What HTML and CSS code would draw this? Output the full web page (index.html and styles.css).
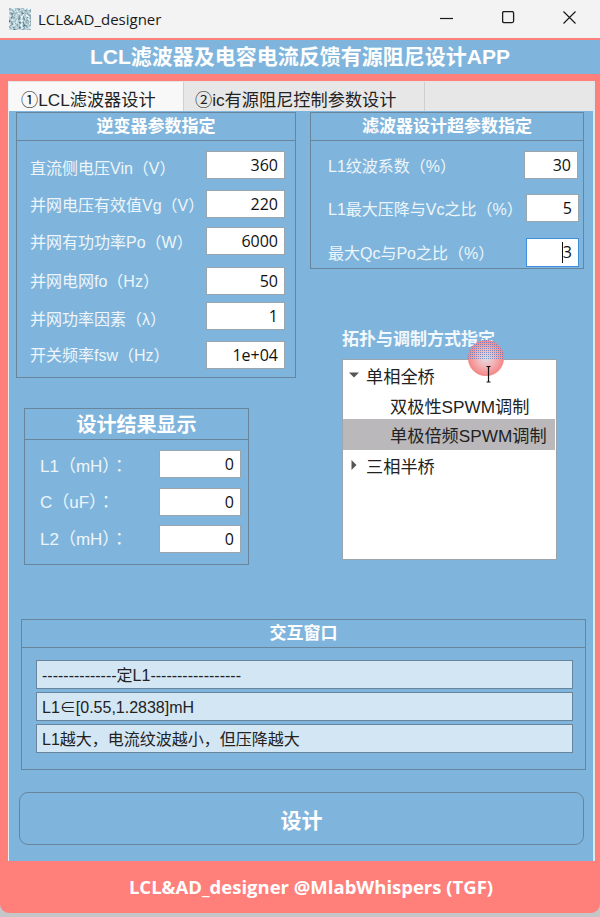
FILE: index.html
```html
<!DOCTYPE html>
<html lang="zh-CN">
<head>
<meta charset="utf-8">
<title>LCL&amp;AD_designer</title>
<link rel="stylesheet" href="styles.css">
</head>
<body>
<div class="window">
  <div class="titlebar">
    <svg class="app-icon" width="22" height="22" viewBox="0 0 22 22">
      <defs>
        <filter id="mosaic" x="0" y="0" width="100%" height="100%">
          <feTurbulence type="fractalNoise" baseFrequency="0.42" numOctaves="2" seed="7"/>
          <feColorMatrix type="matrix" values="1.1 1.1 0 0 -0.65  1.1 1.1 0 0 -0.52  1.1 1.1 0 0 -0.46  0 0 0 0 1"/>
        </filter>
      </defs>
      <rect width="22" height="22" filter="url(#mosaic)"/>
    </svg>
    <span class="app-name">LCL&amp;AD_designer</span>
    <div class="win-buttons">
      <svg class="win-btn win-min" width="14" height="14" viewBox="0 0 14 14"><path d="M0 7.5H13" stroke="#1a1a1a" stroke-width="1.2" fill="none"/></svg>
      <svg class="win-btn" width="14" height="14" viewBox="0 0 14 14"><rect x="0.6" y="0.6" width="11" height="11" rx="1.5" stroke="#1a1a1a" stroke-width="1.3" fill="none"/></svg>
      <svg class="win-btn" width="14" height="14" viewBox="0 0 14 14"><path d="M0.5 0.5L12.5 12.5M12.5 0.5L0.5 12.5" stroke="#1a1a1a" stroke-width="1.2" fill="none"/></svg>
    </div>
  </div>

  <header class="app-header">LCL滤波器及电容电流反馈有源阻尼设计APP</header>

  <div class="tabgroup">
    <div class="tabs">
      <div class="tab tab-active">①LCL滤波器设计</div>
      <div class="tab tab-second">②ic有源阻尼控制参数设计</div>
      <div class="tab-fill"></div>
    </div>

    <main class="content">
      <div class="columns">
        <div class="col-left">
          <section class="panel panel-inverter">
            <h2 class="panel-head">逆变器参数指定</h2>
            <div class="panel-body rows-inverter">
              <div class="row"><span class="label nudge-down">直流侧电压Vin（V）</span><div class="field field-inv">360</div></div>
              <div class="row"><span class="label">并网电压有效值Vg（V）</span><div class="field field-inv">220</div></div>
              <div class="row"><span class="label">并网有功功率Po（W）</span><div class="field field-inv">6000</div></div>
              <div class="row"><span class="label nudge-up">并网电网fo（Hz）</span><div class="field field-inv">50</div></div>
              <div class="row"><span class="label nudge-down">并网功率因素（λ）</span><div class="field field-inv">1</div></div>
              <div class="row"><span class="label nudge-up">开关频率fsw（Hz）</span><div class="field field-inv">1e+04</div></div>
            </div>
          </section>

          <section class="panel panel-result">
            <h2 class="panel-head panel-head-large">设计结果显示</h2>
            <div class="panel-body rows-result">
              <div class="row"><span class="label label-result">L1（mH）：</span><div class="field field-res">0</div></div>
              <div class="row"><span class="label label-result nudge-up">C（uF）：</span><div class="field field-res">0</div></div>
              <div class="row"><span class="label label-result nudge-up">L2（mH）：</span><div class="field field-res">0</div></div>
            </div>
          </section>
        </div>

        <div class="col-right">
          <section class="panel panel-filter">
            <h2 class="panel-head">滤波器设计超参数指定</h2>
            <div class="panel-body rows-filter">
              <div class="row"><span class="label">L1纹波系数（%）</span><div class="field field-a">30</div></div>
              <div class="row"><span class="label">L1最大压降与Vc之比（%）</span><div class="field field-b">5</div></div>
              <div class="row"><span class="label">最大Qc与Po之比（%）</span><div class="field field-b field-focus"><i class="caret"></i>3</div></div>
            </div>
          </section>

          <section class="topology">
            <h3 class="topology-title">拓扑与调制方式指定</h3>
            <div class="tree">
              <div class="tree-row"><svg class="arrow" width="10" height="10" viewBox="0 0 10 10"><path d="M0 2.5H10L5 7.5Z" fill="#555"/></svg>单相全桥</div>
              <div class="tree-row tree-child">双极性SPWM调制</div>
              <div class="tree-row tree-child tree-selected">单极倍频SPWM调制</div>
              <div class="tree-row"><svg class="arrow" width="10" height="10" viewBox="0 0 10 10"><path d="M2.5 0V10L7.5 5Z" fill="#555"/></svg>三相半桥</div>
            </div>
            <svg class="pointer" width="40" height="46" viewBox="0 0 40 46">
              <defs>
                <radialGradient id="halo" cx="0.5" cy="0.5" r="0.5">
                  <stop offset="0" stop-color="#d9dfe8"/>
                  <stop offset="0.45" stop-color="#f3b9bb"/>
                  <stop offset="1" stop-color="#f58585"/>
                </radialGradient>
                <pattern id="dots" width="2" height="2" patternUnits="userSpaceOnUse">
                  <rect width="1" height="1" fill="#4d78c8"/>
                </pattern>
                <clipPath id="upper"><rect x="0" y="0" width="40" height="22"/></clipPath>
              </defs>
              <circle cx="20" cy="20" r="18" fill="url(#halo)"/>
              <circle cx="20" cy="20" r="18" fill="url(#dots)" clip-path="url(#upper)" opacity="0.7"/>
              <path d="M20.5 28.5h4M22.5 28.5V44M20.5 44h4" stroke="#111" stroke-width="1.2" fill="none"/>
            </svg>
          </section>
        </div>
      </div>

      <section class="panel panel-console">
        <h2 class="panel-head">交互窗口</h2>
        <div class="panel-body console-body">
          <div class="log-line">--------------定L1-----------------</div>
          <div class="log-line">L1∈[0.55,1.2838]mH</div>
          <div class="log-line">L1越大，电流纹波越小，但压降越大</div>
        </div>
      </section>

      <button class="design-btn" type="button">设计</button>
    </main>
  </div>

  <footer class="app-footer">LCL&amp;AD_designer @MlabWhispers (TGF)</footer>
</div>
</body>
</html>
```
FILE: styles.css
```css
* { box-sizing: border-box; }
html, body { margin: 0; padding: 0; }
body {
  width: 600px;
  height: 917px;
  background: #c4c6c8;
  overflow: hidden;
  font-family: "Liberation Sans", "Noto Sans CJK SC", sans-serif;
}
.window {
  width: 600px;
  height: 913px;
  display: flex;
  flex-direction: column;
  background: #ff7f7b;
  border-radius: 0 0 9px 9px;
  overflow: hidden;
}
.titlebar {
  height: 38px;
  flex: none;
  background: #f3f3f3;
  display: flex;
  align-items: center;
  padding: 0 0 1px 9px;
}
.app-icon { flex: none; margin-right: 7px; }
.app-name {
  font-family: "Open Sans", sans-serif;
  font-size: 15px;
  color: #1a1a1a;
}
.win-buttons { margin-left: auto; display: flex; align-items: center; gap: 47px; padding: 0 23px 2px 0; }
.win-btn { display: block; }
.win-min { margin-right: 1px; }

.app-header {
  flex: none;
  margin-top: 2px;
  height: 34px;
  background: #7fb5dc;
  color: #fff;
  font-size: 21px;
  font-weight: 700;
  line-height: 34px;
  text-align: center;
}

.tabgroup {
  flex: none;
  margin: 7px 5px 0 8px;
  height: 780px;
  display: flex;
  flex-direction: column;
  background: #7fb5dc;
  border-right: 2px solid #dfe6ec;
  border-left: 1px solid #e8edf0;
}
.tabs { flex: none; height: 30px; display: flex; background: #e8e7e7; border-top: 1px solid #e4e4e4; }
.tab {
  flex: none;
  font-size: 17.2px;
  line-height: 37px;
  color: #222;
  white-space: nowrap;
  overflow: hidden;
}
.tab-active { width: 175px; background: #f8f8f8; padding-left: 12px; border-right: 1px solid #d0d0d0; }
.tab-second { width: 241px; padding-left: 11px; border-right: 1px solid #cfcfcf; }
.tab-fill { flex: 1; }

.content { flex: 1; display: flex; flex-direction: column; padding-top: 1px; }
.columns { display: flex; height: 507px; padding-left: 7px; gap: 14px; flex: none; }
.col-left { width: 280px; flex: none; }
.col-right { width: 274px; flex: none; }

.panel { border: 1.5px solid #69859b; background: #7fb5dc; }
.panel-head {
  margin: 0;
  height: 28px;
  font-size: 17px;
  line-height: 28px;
  font-weight: 700;
  color: #fff;
  text-align: center;
  border-bottom: 1.5px solid #69859b;
}
.panel-head-large { height: 31px; font-size: 20px; line-height: 32px; }
.panel-body { display: grid; align-items: start; }

.panel-inverter { height: 266px; }
.rows-inverter {
  padding: 10px 10px 0 13px;
  grid-template-rows: 39px 37px 40px 35px 39px 28px;
}
.panel-result { width: 225px; height: 157px; margin: 30px 0 0 8px; }
.rows-result {
  padding: 10px 7px 0 15px;
  grid-template-rows: 38px 37px 28px;
}
.panel-filter { height: 157px; }
.rows-filter {
  padding: 10px 4px 0 17px;
  grid-template-rows: 43px 44px 29px;
}

.row { display: flex; align-items: center; justify-content: space-between; height: 28px; }
.label { font-size: 16px; color: #eef5fa; white-space: nowrap; }
.label-result { font-size: 17px; font-family: "Liberation Sans", "Noto Sans CJK TC", sans-serif; }
.nudge-down { padding-top: 3px; }
.nudge-up { padding-bottom: 3px; }
.field {
  height: 28px;
  background: #fff;
  border: 1px solid #9aa6ae;
  font-family: "Open Sans", sans-serif;
  font-size: 16px;
  line-height: 27px;
  text-align: right;
  color: #111;
  padding-right: 6px;
  position: relative;
}
.field-inv { width: 79px; }
.field-res { width: 82px; }
.field-a { width: 54px; margin-right: 1px; }
.field-b { width: 53px; }
.field-focus { border-color: #3f8fdf; height: 29px; }
.caret {
  position: absolute;
  right: 15px;
  top: 3px;
  width: 1px;
  height: 21px;
  background: #111;
}

.topology { position: relative; margin-left: 32px; margin-top: 58px; width: 215px; }
.topology-title {
  margin: 0 0 7px;
  height: 25px;
  font-size: 17px;
  line-height: 25px;
  font-weight: 700;
  color: #f2f8fc;
  white-space: nowrap;
}
.tree {
  height: 201px;
  background: #fff;
  border: 1px solid #9aa6ae;
}
.tree-row {
  height: 30px;
  display: flex;
  align-items: center;
  font-size: 17.2px;
  color: #222;
  padding: 0 0 0 6px;
  white-space: nowrap;
}
.arrow { margin-right: 7px; flex: none; }
.tree-child { padding-left: 47px; }
.tree-selected { height: 31px; margin-top: -1px; background: #bab8ba; margin-right: 1px; }
.pointer { position: absolute; left: 124px; top: 11px; }

.panel-console { width: 565px; height: 151px; margin-left: 12px; }
.console-body {
  padding: 12px 12px 0 14px;
  grid-auto-rows: 29px;
  row-gap: 3px;
}
.log-line {
  height: 29px;
  background: #d3e6f4;
  border: 1.5px solid #69859b;
  font-size: 16px;
  line-height: 29px;
  color: #222;
  padding-left: 5px;
  white-space: nowrap;
}

.design-btn {
  display: block;
  width: 565px;
  height: 53px;
  margin: 22px 0 0 10px;
  background: #7fb5dc;
  border: 1.5px solid #69859b;
  border-radius: 9px;
  font-family: inherit;
  font-size: 21px;
  font-weight: 700;
  color: #fff;
}

.app-footer {
  flex: 1;
  font-family: "Open Sans", sans-serif;
  font-size: 18.5px;
  font-weight: 700;
  color: #fff;
  text-align: center;
  padding: 14px 0 0 22px;
  line-height: 24px;
}
```
